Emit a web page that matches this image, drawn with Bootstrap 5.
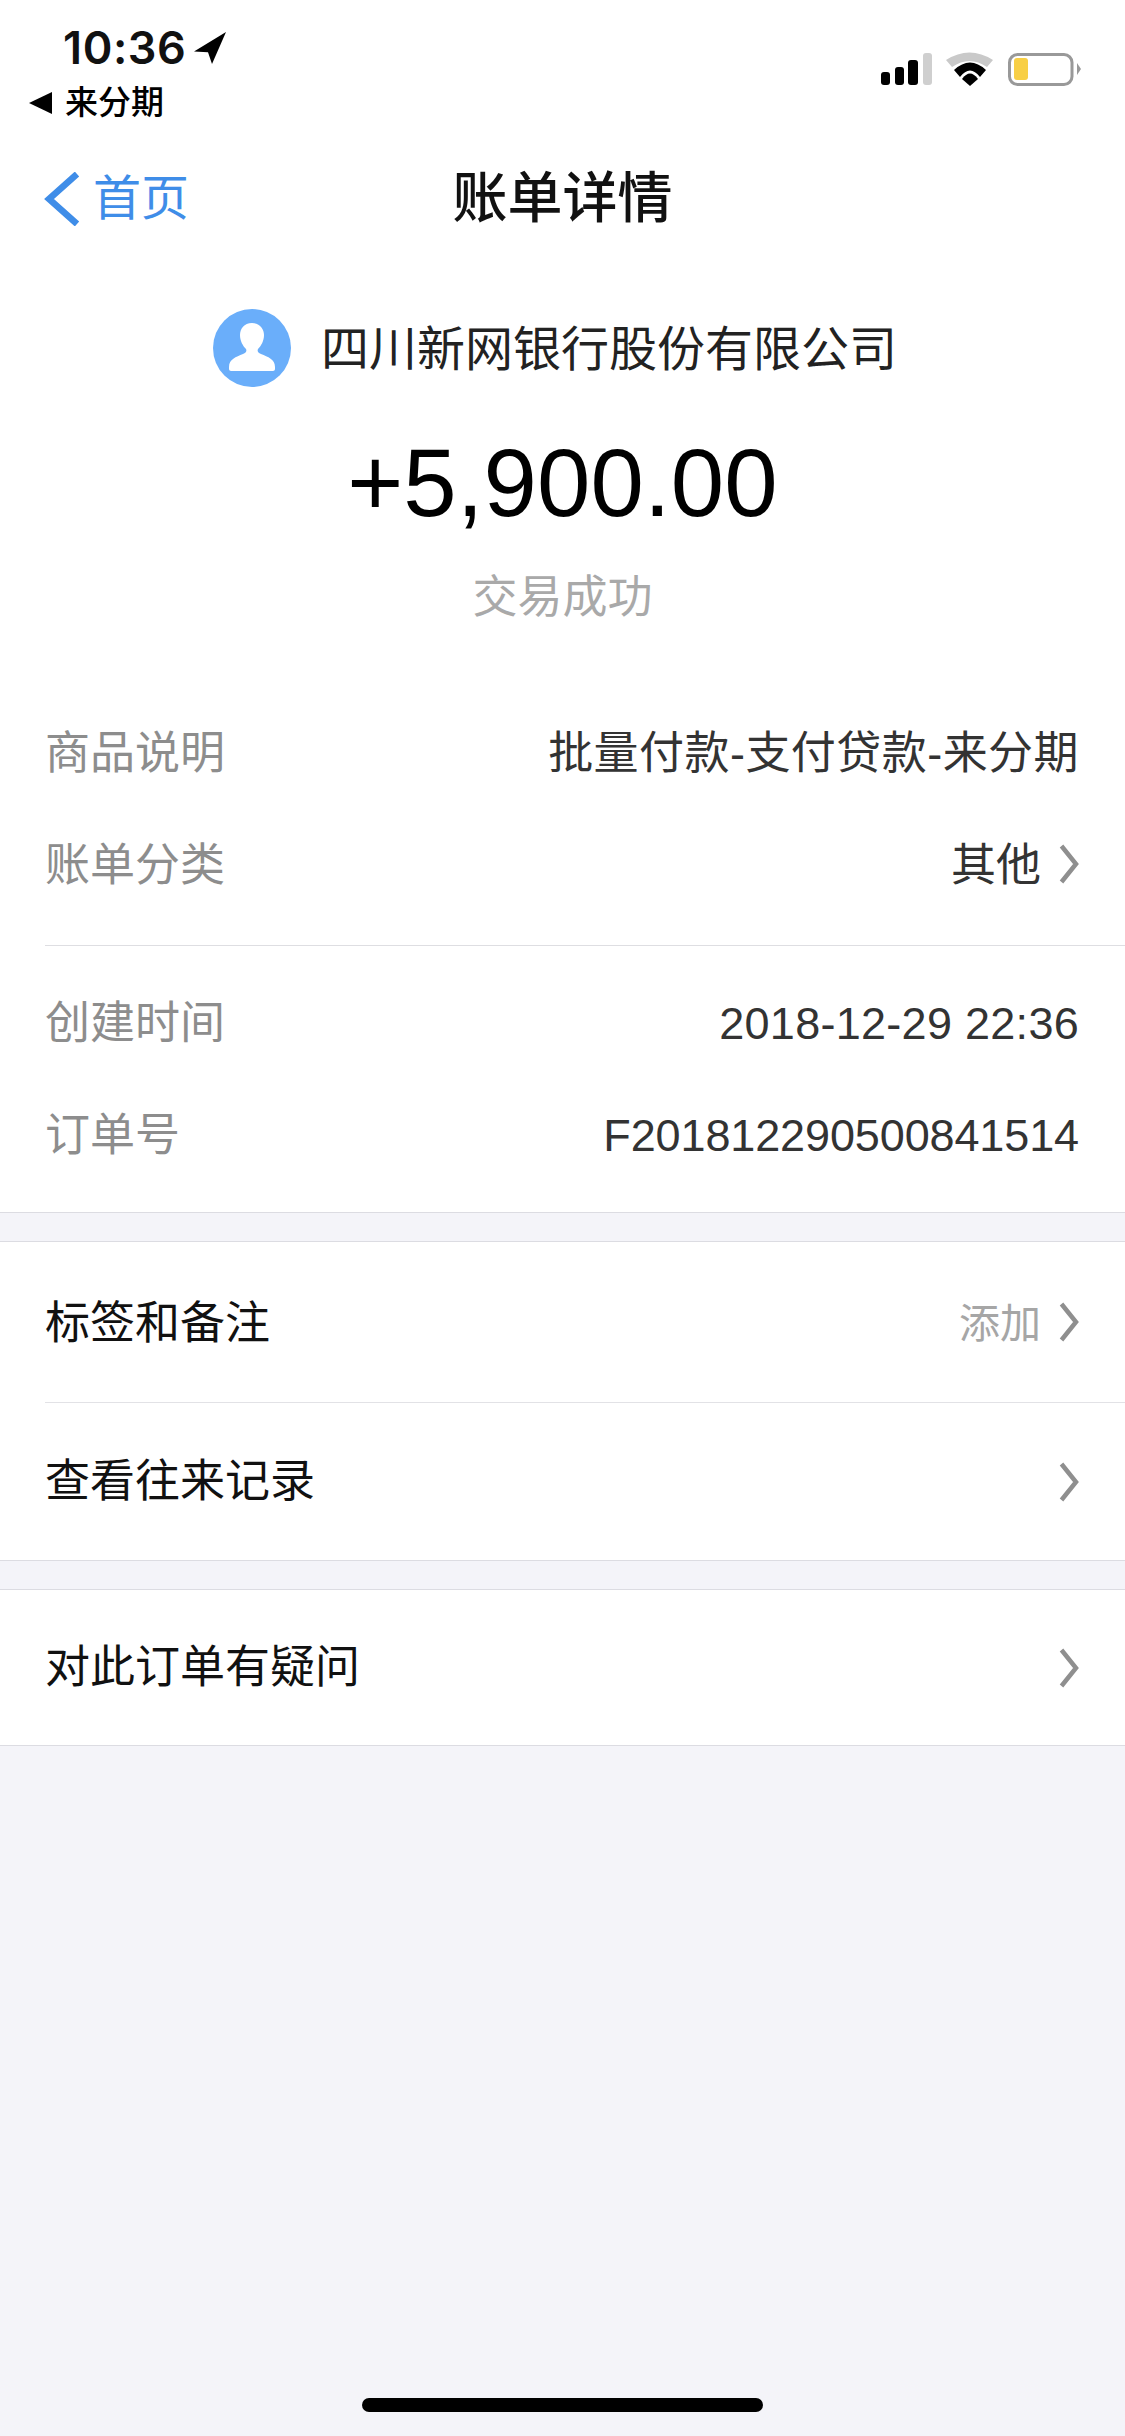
<!doctype html>
<html lang="zh-CN">
<head>
<meta charset="utf-8">
<title>账单详情</title>
<link href="https://cdn.jsdelivr.net/npm/bootstrap@5.3.0/dist/css/bootstrap.min.css" rel="stylesheet">
<style>
html,body{height:100%}
body{background:#f4f4f9;font-family:"Liberation Sans","Noto Sans CJK SC",sans-serif;color:#111}
.shell{width:1125px;min-height:2436px}
.sb{height:132px;padding:28px 44px 0 29px;background:#fff}
.sb-time{font-family:Inter,"Noto Sans CJK SC",sans-serif;font-size:45px;line-height:40px;font-weight:600;margin-left:34px;letter-spacing:.6px}
.sb-app{font-size:33px;line-height:36px;font-weight:500;margin-top:17px;color:#000}
.sb-icons{margin-top:24px}
.nav-h{height:132px;background:#fff}
.nav-back{left:44px;top:40px;gap:13px;color:#3f8de8;font-size:48px;line-height:52px}
.nav-ttl{font-size:55px;line-height:60px;font-weight:500;color:#111}
.top-block{background:#fff;padding-top:45px;padding-bottom:22px;border-bottom:1px solid #dcdce2}
.who{height:78px;font-size:48px;line-height:78px;color:#222;gap:30px;padding-right:15px}
.who-name{padding-top:3px}
.ava{width:78px;height:78px}
.amt{font-size:96px;line-height:110px;margin-top:41px;color:#000;letter-spacing:.1px}
.state{font-size:45px;line-height:60px;margin-top:30px;color:#a9a9a9;margin-bottom:68px}
.d-row{height:112px;padding:0 46px 0 45px;font-size:45px;color:#333}
.d-row>span{padding-top:3px}
.d-row .lbl{color:#8d8d8d}
.d-row .wide{letter-spacing:.45px}
.d-row .date{letter-spacing:.28px}
.d-row .code{letter-spacing:-.12px}
.d-sep{margin:25px 0 20px 45px;height:1px;background:#dedee2}
.gray-gap{height:28px}
.grp{background:#fff;border-top:1px solid #dcdce2;border-bottom:1px solid #dcdce2}
.l-row{padding:0 46px 0 0;margin-left:45px;font-size:45px;color:#111;height:157px}
.l-row.first{height:161px;border-bottom:1px solid #e2e2e6}
.l-row.first .tag-txt{padding-top:3px}
.l-row.sng{height:155px}
.add{font-size:41px;color:#a6a6a6}
.add-txt{padding-top:6px}
.chv{width:20px;height:40px;flex:none}
.d-row .chv{margin-top:-3px}
.val-gap{gap:18px}
.home-bar{width:401px;height:14px;border-radius:7px;background:#000;margin:auto auto 24px}
</style>
</head>
<body>
<div class="shell d-flex flex-column">
  <div class="sb d-flex justify-content-between align-items-start">
    <div>
      <div class="d-flex align-items-center gap-2">
        <span class="sb-time">10:36</span>
        <svg width="32" height="32" viewBox="0 0 32 32"><path d="M32 0 0 19.500l14 .8L18 32z" fill="#000"/></svg>
      </div>
      <div class="sb-app d-flex align-items-center gap-2">
        <svg width="24" height="22" viewBox="0 0 24 22" class="me-1"><path d="M23 0v22L0 11z" fill="#000"/></svg>
        <span>来分期</span>
      </div>
    </div>
    <svg class="sb-icons" width="200" height="36" viewBox="0 0 200 36">
      <rect x="0" y="20" width="9" height="13" rx="3" fill="#000"/>
      <rect x="14" y="15" width="9" height="18" rx="3" fill="#000"/>
      <rect x="27" y="8" width="10" height="25" rx="3" fill="#000"/>
      <rect x="42" y="1" width="9" height="32" rx="3" fill="#cfcfcf"/>
      <path d="M65 8Q88.500-7 112 8L106 15Q88.500 3 71 15z" fill="#c9c9c9"/>
      <path d="M73 18Q89 3 105 18L99 25Q89 12 79 25z" fill="#000"/>
      <path d="M81 27Q89 16 97 27L89 34z" fill="#000"/>
      <rect x="128.500" y="2.500" width="62.500" height="30" rx="8" fill="none" stroke="#999" stroke-width="3"/>
      <rect x="133" y="6" width="14" height="22" rx="3" fill="#f8cf45"/>
      <path d="M196 11l4 6-4 6z" fill="#999"/>
    </svg>
  </div>

  <div class="nav-h position-relative d-flex align-items-center justify-content-center">
    <div class="nav-back position-absolute d-flex align-items-center">
      <svg width="36" height="54" viewBox="0 0 36 54"><path d="M33 2 5 27l28 25" fill="none" stroke="#3f8de8" stroke-width="6.500"/></svg>
      <span>首页</span>
    </div>
    <div class="nav-ttl">账单详情</div>
  </div>

  <div class="top-block">
    <div class="who d-flex justify-content-center align-items-center">
      <svg class="ava" viewBox="0 0 78 78">
        <circle cx="39" cy="39" r="39" fill="#6aaefa"/>
        <path d="M39 14c8 0 12 6 12 12 0 6-3 11-6 14-1 2 0 4 3 5 7 3 14 5 14 13v2c0 1-1 2-2 2H18c-1 0-2-1-2-2v-2c0-8 7-10 14-13 3-1 4-3 3-5-3-3-6-8-6-14 0-6 4-12 12-12z" fill="#fff"/>
      </svg>
      <span class="who-name">四川新网银行股份有限公司</span>
    </div>
    <div class="amt text-center">+5,900.00</div>
    <div class="state text-center">交易成功</div>

    <div class="d-row d-flex justify-content-between align-items-center"><span class="lbl">商品说明</span><span class="wide">批量付款-支付贷款-来分期</span></div>
    <div class="d-row d-flex justify-content-between align-items-center"><span class="lbl">账单分类</span>
      <span class="d-flex align-items-center val-gap">其他<svg class="chv" viewBox="0 0 20 40"><path d="M2.500 2 17 20 2.500 38" fill="none" stroke="#8f8f8f" stroke-width="4.500"/></svg></span></div>
    <div class="d-sep"></div>
    <div class="d-row d-flex justify-content-between align-items-center"><span class="lbl">创建时间</span><span class="date">2018-12-29 22:36</span></div>
    <div class="d-row d-flex justify-content-between align-items-center"><span class="lbl">订单号</span><span class="code">F201812290500841514</span></div>
  </div>

  <div class="gray-gap"></div>

  <div class="grp">
    <div class="l-row first d-flex justify-content-between align-items-center"><span class="tag-txt">标签和备注</span>
      <span class="d-flex align-items-center val-gap add"><span class="add-txt">添加</span><svg class="chv" viewBox="0 0 20 40"><path d="M2.500 2 17 20 2.500 38" fill="none" stroke="#8f8f8f" stroke-width="4.500"/></svg></span></div>
    <div class="l-row d-flex justify-content-between align-items-center"><span>查看往来记录</span>
      <svg class="chv" viewBox="0 0 20 40"><path d="M2.500 2 17 20 2.500 38" fill="none" stroke="#8f8f8f" stroke-width="4.500"/></svg></div>
  </div>

  <div class="gray-gap"></div>

  <div class="grp">
    <div class="l-row sng d-flex justify-content-between align-items-center"><span>对此订单有疑问</span>
      <svg class="chv" viewBox="0 0 20 40"><path d="M2.500 2 17 20 2.500 38" fill="none" stroke="#8f8f8f" stroke-width="4.500"/></svg></div>
  </div>

  <div class="home-bar"></div>
</div>
<script src="https://cdn.jsdelivr.net/npm/bootstrap@5.3.0/dist/js/bootstrap.bundle.min.js"></script>
</body>
</html>
